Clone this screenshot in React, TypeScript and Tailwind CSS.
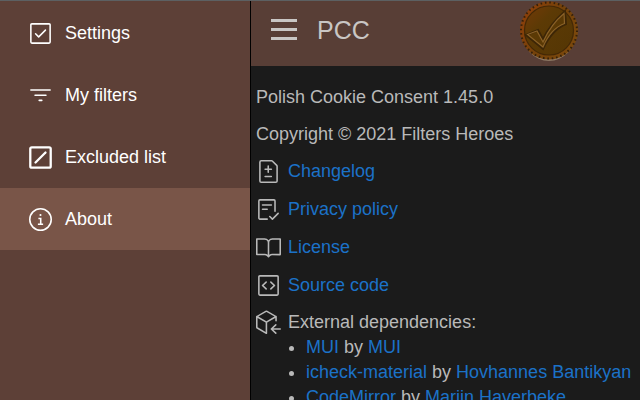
import type { ReactNode } from 'react'
import { GoBook, GoCheckbox, GoChecklist, GoCodeSquare, GoFileDiff, GoFilter, GoPackageDependencies } from 'react-icons/go'

const InfoIcon = () => (
  <svg viewBox="0 0 24 24" className="size-[25px]" fill="none" stroke="currentColor" strokeWidth="1.5">
    <circle cx="12" cy="12" r="10.3" />
    <path d="M10 11h2.2v5.2M9.5 16.5h5" />
    <circle cx="12" cy="7.7" r="1" fill="currentColor" stroke="none" />
  </svg>
)

const ExcludedIcon = () => (
  <svg viewBox="0 0 24 24" className="size-[25px]" fill="none" stroke="currentColor" strokeWidth="2.2">
    <rect x="2.2" y="2.2" width="19.6" height="19.6" rx="1.5" />
    <path d="M7.2 16.8l9.6-9.6" strokeLinecap="round" />
  </svg>
)

const Coin = () => (
  <svg viewBox="0 0 60 60" className="size-15" fill="none" aria-hidden="true">
    <defs>
      <linearGradient id="rim" x1="0" y1="0.2" x2="1" y2="0.8">
        <stop offset="0" stopColor="#8e3f0a" />
        <stop offset="0.5" stopColor="#74420a" />
        <stop offset="1" stopColor="#7d4a0c" />
      </linearGradient>
      <linearGradient id="face" x1="0" y1="0" x2="1" y2="1">
        <stop offset="0" stopColor="#743a08" />
        <stop offset="0.35" stopColor="#5c3a05" />
        <stop offset="1" stopColor="#543604" />
      </linearGradient>
    </defs>
    <ellipse cx="30" cy="31" rx="27" ry="29" fill="#8b7763" />
    <circle cx="30" cy="29.5" r="29" fill="url(#rim)" />
    <circle cx="30" cy="29.5" r="28" stroke="#35200a" strokeWidth="2" strokeDasharray="1.6 2.8" />
    <circle cx="30" cy="29.5" r="24.5" fill="url(#face)" stroke="#432806" strokeWidth="1.2" />
    <path d="M7 34l12-5 5 9C30 26 38 17 46 10l1 13C37 27 30 35 24 48z" stroke="#3d2606" strokeWidth="2" />
    <path d="M8.5 33.5l9.5-3.5 6 11C30 28 37 19 45 12.5l.5 10C36 26 29 34 24 46z" stroke="#8a6128" strokeWidth="1.2" />
  </svg>
)

const menu = [
  { label: 'Settings', icon: <GoCheckbox className="size-[25px]" /> },
  { label: 'My filters', icon: <GoFilter className="size-[25px]" /> },
  { label: 'Excluded list', icon: <ExcludedIcon /> },
  { label: 'About', icon: <InfoIcon />, active: true },
]

const links = [
  { label: 'Changelog', icon: <GoFileDiff className="size-[25px]" /> },
  { label: 'Privacy policy', icon: <GoChecklist className="size-[25px]" /> },
  { label: 'License', icon: <GoBook className="size-[25px]" /> },
  { label: 'Source code', icon: <GoCodeSquare className="size-[25px]" /> },
]

const dependencies = [
  { name: 'MUI', author: 'MUI' },
  { name: 'icheck-material', author: 'Hovhannes Bantikyan' },
  { name: 'CodeMirror', author: 'Marijn Haverbeke' },
]

const Link = ({ children }: { children: ReactNode }) => (
  <a href="#" className="text-[#1b72c8]">{children}</a>
)

export default function App() {
  return (
    <div className="flex h-screen overflow-hidden border-t border-[#5c6062] bg-[#1b1b1b] font-['Liberation_Sans',Arial,sans-serif] text-lg/[25px] text-[#b9b9b9]">
      {/* Sidebar */}
      <nav className="w-[251px] shrink-0 border-r border-black bg-[#5d4037] pt-px text-white">
        {menu.map((item) => (
          <a
            key={item.label}
            href="#"
            className={`flex h-[62px] items-center gap-3 pl-7 ${item.active ? 'bg-[#795548]' : ''}`}
          >
            {item.icon}
            {item.label}
          </a>
        ))}
      </nav>

      <div className="min-w-0 flex-1">
        <header className="flex h-[65px] items-center bg-[#583e36] pl-5 text-[#c9c6c4]">
          <button type="button" aria-label="Toggle menu" className="mb-2 flex w-[26px] flex-col gap-[6px]">
            <span className="h-[3px] bg-current" />
            <span className="h-[3px] bg-current" />
            <span className="h-[3px] bg-current" />
          </button>
          <h1 className="mb-2 ml-5 text-[25px]/8">PCC</h1>
          <div className="ml-auto mr-[61px] self-start">
            <Coin />
          </div>
        </header>

        {/* About */}
        <main className="flex flex-col gap-3 px-[5px] pt-[19px]">
          <p>Polish Cookie Consent 1.45.0</p>
          <p>Copyright © 2021 Filters Heroes</p>
          <ul className="flex flex-col gap-[13px]">
            {links.map((link) => (
              <li key={link.label} className="flex items-center gap-[7px]">
                {link.icon}
                <Link>{link.label}</Link>
              </li>
            ))}
          </ul>
          <section>
            <h2 className="flex items-center gap-[7px]">
              <GoPackageDependencies className="size-[25px]" />
              External dependencies:
            </h2>
            <ul className="list-disc pl-[50px]">
              {dependencies.map((dep) => (
                <li key={dep.name} className="whitespace-nowrap">
                  <Link>{dep.name}</Link> by <Link>{dep.author}</Link>
                </li>
              ))}
            </ul>
          </section>
        </main>
      </div>
    </div>
  )
}
